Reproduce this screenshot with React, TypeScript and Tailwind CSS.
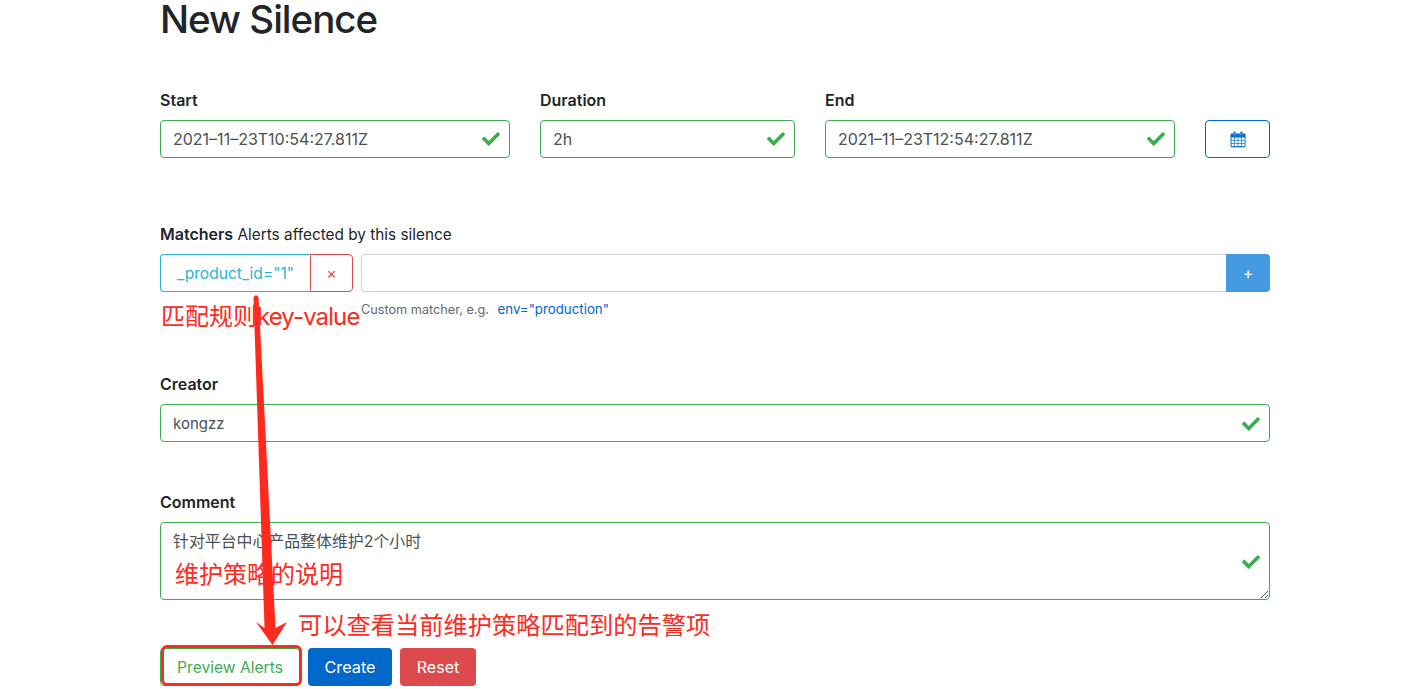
import { FaCheck } from "react-icons/fa";

const green = "border-[#3fab50]";

function Check({ className = "" }: { className?: string }) {
  return <FaCheck className={"absolute text-[#3fab50] w-[18px] h-[18px] right-[9px] " + className} />;
}

function ValidInput({ value, width, size = "text-[16px]" }: { value: string; width: string; size?: string }) {
  return (
    <div className={`relative ${width} h-[38px] flex items-center border ${green} rounded-[4px] pl-3 ${size} text-[#495057]`}>
      {value}
      <Check />
    </div>
  );
}

function Calendar() {
  return (
    <svg width="16" height="17" viewBox="0 0 16 17" className="text-[#0a6fd0]">
      <rect x="0.5" y="2.5" width="15" height="13.5" rx="1" fill="currentColor" />
      <rect x="0.5" y="16" width="15" height="1" fill="#a8d0f2" />
      <rect x="3" y="0.5" width="3" height="4" rx="1.4" fill="#3b90dc" />
      <rect x="10" y="0.5" width="3" height="4" rx="1.4" fill="#3b90dc" />
      <g fill="#fff">
        <rect x="1.5" y="6.5" width="2.8" height="2.4" />
        <rect x="5" y="6.5" width="2.7" height="2.4" />
        <rect x="8.4" y="6.5" width="2.7" height="2.4" />
        <rect x="11.8" y="6.5" width="2.8" height="2.4" />
        <rect x="1.5" y="9.6" width="2.8" height="2.4" />
        <rect x="5" y="9.6" width="2.7" height="2.4" />
        <rect x="8.4" y="9.6" width="2.7" height="2.4" />
        <rect x="11.8" y="9.6" width="2.8" height="2.4" />
        <rect x="1.5" y="12.7" width="2.8" height="2.4" />
        <rect x="5" y="12.7" width="2.7" height="2.4" />
        <rect x="8.4" y="12.7" width="2.7" height="2.4" />
        <rect x="11.8" y="12.7" width="2.8" height="2.4" />
      </g>
    </svg>
  );
}

const label = "font-semibold h-[24px] text-[16px]";

export default function App() {
  return (
    <div
      className="relative h-[689px] overflow-hidden bg-white text-[#212529] text-[16px] leading-[24px]"
      style={{ fontFamily: 'Inter, "Noto Sans CJK SC", sans-serif' }}
    >
      <div className="w-[1110px] ml-[160px] flex flex-col -mt-[5px]">
        <h1 className="text-[38.5px] leading-[48px] font-medium tracking-[-1px]">New Silence</h1>

        <div className="flex gap-[30px] mt-[45px]">
          <div>
            <div className={label + " mb-2"}>Start</div>
            <ValidInput value="2021–11–23T10:54:27.811Z" width="w-[350px]" />
          </div>
          <div>
            <div className={label + " mb-2"}>Duration</div>
            <ValidInput value="2h" width="w-[255px]" />
          </div>
          <div>
            <div className={label + " mb-2"}>End</div>
            <ValidInput value="2021–11–23T12:54:27.811Z" width="w-[350px]" />
          </div>
          <div className="pt-[32px]">
            <button className="w-[65px] h-[38px] flex items-center justify-center border border-[#0068c9] rounded-[4px]">
              <Calendar />
            </button>
          </div>
        </div>

        <div className="mt-[64px] h-[24px] text-[15.35px]">
          <span className="font-semibold text-[16px]">Matchers</span> Alerts affected by this silence
        </div>
        <div className="flex mt-2 gap-2">
          <div className="flex h-[38px] w-[193px] shrink-0">
            <div className="w-[151px] pt-px border border-r-0 border-[#2ab4d6] rounded-l-[4px] flex items-center pl-[16px] text-[#2ab4d6] text-[15.6px] whitespace-nowrap">
              _product_id="1"
            </div>
            <div className="w-[43px] border border-[#dd4a4e] rounded-r-[4px] flex items-center justify-center text-[#dd4a4e] text-[16px]">
              ×
            </div>
          </div>
          <div className="flex-1 flex h-[38px]">
            <div className="flex-1 border border-r-0 border-[#ced4da] rounded-l-[4px]" />
            <div className="w-[44px] bg-[#449ae1] rounded-r-[4px] flex items-center justify-center text-white text-[16px]">+</div>
          </div>
        </div>
        <div className="ml-[201px] h-[19px] text-[12.7px] leading-[19px] mt-2 text-[#62696f]">
          Custom matcher, e.g. <span className="text-[#0068c9] ml-[5px] text-[13.3px]">env="production"</span>
        </div>

        <div className={"mt-[53px] " + label}>Creator</div>
        <div className="mt-2">
          <ValidInput value="kongzz" width="w-full" size="text-[15px] pt-px" />
        </div>

        <div className={"mt-[48px] " + label}>Comment</div>
        <div className="relative mt-2 h-[78px] border border-[#3fab50] rounded-[4px] pl-3 pt-[7px] text-[#495057] text-[15.9px]">
          针对平台中心产品整体维护2个小时
          <Check className="top-[30px]" />
          <svg width="10" height="10" viewBox="0 0 10 10" className="absolute right-0 bottom-0 text-[#555]">
            <path d="M2 9 9 2M6 9 9 6" stroke="currentColor" strokeWidth="1" />
          </svg>
        </div>

        <div className="flex gap-2 mt-[48px]">
          <button className="w-[140px] h-[38px] pt-px border border-[#3fab50] rounded-[4px] text-[#3fab50] text-[15.6px]">Preview Alerts</button>
          <button className="w-[84px] h-[38px] bg-[#0068c9] rounded-[4px] text-white text-[16.3px]">Create</button>
          <button className="w-[76px] h-[38px] bg-[#dc4a4e] rounded-[4px] text-white text-[16px]">Reset</button>
        </div>
      </div>

      {/* screenshot annotations drawn over the page */}
      <div className="absolute left-[161px] top-[301px] text-[24px] leading-[32px] text-[#ff2a1e] whitespace-nowrap">
        匹配规则<span className="tracking-[-0.9px]">key-value</span>
      </div>
      <div className="absolute left-[175px] top-[559px] text-[24px] leading-[32px] text-[#ff2a1e] whitespace-nowrap">维护策略的说明</div>
      <div className="absolute left-[298px] top-[610px] text-[24.25px] leading-[32px] text-[#ff2a1e] whitespace-nowrap">可以查看当前维护策略匹配到的告警项</div>
      <div className="absolute left-[161px] top-[645px] w-[141px] h-[41px] border-[3px] border-[#ff2a1e] rounded-[6px]" />
      <svg width="1428" height="689" viewBox="0 0 1428 689" className="absolute left-0 top-0 pointer-events-none">
        <polygon points="253.5,297 256,295 258.5,297 275.5,628 287,622 272.5,645 256,622 264.5,628" fill="#ff2a1e" />
      </svg>
    </div>
  );
}
